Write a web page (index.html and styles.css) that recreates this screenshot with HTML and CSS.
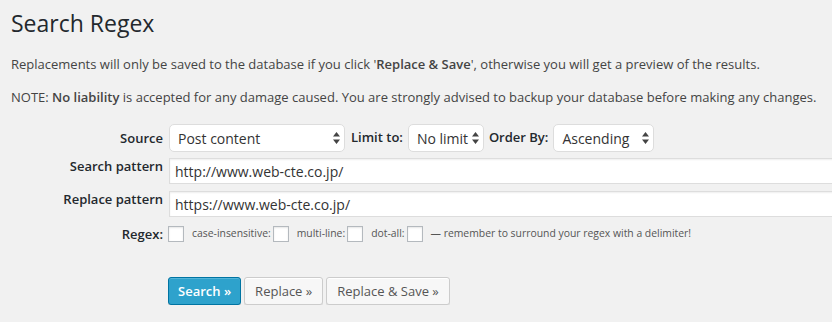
FILE: index.html
```html
<!DOCTYPE html>
<html>
<head>
  <meta charset="utf-8" />
  <meta name="viewport" content="width=device-width" />
  <title>Search Regex</title>
  <link rel="stylesheet" href="styles.css">
</head>

<body>
  <div class="wrap">
    <h1 class="page-title">Search Regex</h1>
    <p>Replacements will only be saved to the database if you click '<strong>Replace &amp; Save</strong>', otherwise you will get a preview of the results.</p>
    <p>NOTE: <strong>No liability</strong> is accepted for any damage caused. You are strongly advised to backup your database before making any changes.</p>

    <form class="regex-form">
      <div class="form-grid">
        <label class="row-label row-label-mid" for="source">Source</label>
        <div class="select-line">
          <span class="select-box select-source">
            <select id="source" name="source">
              <option>Post content</option>
            </select>
            <svg class="select-arrow" width="7" height="12" viewBox="0 0 7 12"><path d="M3.5 0 L7 4.5 H0 Z M0 7.5 H7 L3.5 12 Z" fill="#444"/></svg>
          </span>
          <label class="inline-label" for="limit">Limit to:</label>
          <span class="select-box select-limit">
            <select id="limit" name="limit">
              <option>No limit</option>
            </select>
            <svg class="select-arrow" width="7" height="12" viewBox="0 0 7 12"><path d="M3.5 0 L7 4.5 H0 Z M0 7.5 H7 L3.5 12 Z" fill="#444"/></svg>
          </span>
          <label class="inline-label" for="orderby">Order By:</label>
          <span class="select-box select-order">
            <select id="orderby" name="orderby">
              <option>Ascending</option>
            </select>
            <svg class="select-arrow" width="7" height="12" viewBox="0 0 7 12"><path d="M3.5 0 L7 4.5 H0 Z M0 7.5 H7 L3.5 12 Z" fill="#444"/></svg>
          </span>
        </div>

        <label class="row-label" for="search-pattern">Search pattern</label>
        <input class="pattern-input" id="search-pattern" type="text" value="http://www.web-cte.co.jp/" />

        <label class="row-label" for="replace-pattern">Replace pattern</label>
        <input class="pattern-input" id="replace-pattern" type="text" value="https://www.web-cte.co.jp/" />

        <label class="row-label row-label-mid">Regex:</label>
        <div class="regex-options">
          <input type="checkbox" class="check" />
          <span class="option-text">case-insensitive:</span>
          <input type="checkbox" class="check" />
          <span class="option-text">multi-line:</span>
          <input type="checkbox" class="check" />
          <span class="option-text">dot-all:</span>
          <input type="checkbox" class="check" />
          <span class="option-text">&mdash; remember to surround your regex with a delimiter!</span>
        </div>
      </div>

      <div class="button-row">
        <button type="submit" class="button button-primary">Search &raquo;</button>
        <button type="button" class="button">Replace &raquo;</button>
        <button type="button" class="button">Replace &amp; Save &raquo;</button>
      </div>
    </form>
  </div>
</body>
</html>
```

FILE: styles.css
```css
body {
  margin: 0;
  background-color: #f1f1f1;
  color: #444;
  font-family: 'Open Sans', sans-serif;
  font-size: 13px;
  line-height: 1.5;
}

.wrap {
  padding-left: 11px;
  overflow: hidden;
}

.page-title {
  margin: 0;
  padding: 9px 0 4px;
  font-size: 23px;
  font-weight: 400;
  line-height: 29px;
  color: #23282d;
}

p {
  margin: 13px 0;
}

strong {
  font-weight: 600;
}

.regex-form {
  margin-top: 17px;
}

.form-grid {
  display: grid;
  grid-template-columns: 152px 1fr;
  column-gap: 6px;
  row-gap: 7px;
  align-items: start;
}

.row-label {
  text-align: right;
  font-weight: 600;
  line-height: 16px;
  color: #23282d;
}

.row-label-mid {
  align-self: center;
}

.select-line {
  display: flex;
  align-items: center;
  gap: 5px;
  margin-bottom: -1px;
}

.inline-label {
  font-weight: 600;
  color: #23282d;
}

.select-box {
  position: relative;
  display: inline-block;
}

.select-box select {
  appearance: none;
  -webkit-appearance: none;
  width: 100%;
  height: 28px;
  margin: 0;
  padding: 0 14px 0 8px;
  border: 1px solid #ddd;
  border-radius: 5px;
  background: #fff;
  color: #333;
  font-family: 'Open Sans', sans-serif;
  font-size: 14px;
  outline: none;
}

.select-arrow {
  position: absolute;
  right: 5px;
  top: 8px;
  pointer-events: none;
}

.select-source {
  width: 176px;
  margin-right: 1px;
}

.select-limit {
  width: 76px;
}

.select-order {
  width: 101px;
}

.pattern-input {
  box-sizing: border-box;
  width: 700px;
  height: 26px;
  margin: 0;
  padding: 0 5px;
  border: 1px solid #ddd;
  background: #fff;
  box-shadow: inset 0 1px 2px rgba(0, 0, 0, 0.07);
  color: #333;
  font-family: 'Open Sans', sans-serif;
  font-size: 14px;
  outline: none;
}

.regex-options {
  display: flex;
  align-items: center;
  height: 20px;
  margin-left: -1px;
  font-size: 10.4px;
  color: #555;
}

.check {
  appearance: none;
  -webkit-appearance: none;
  box-sizing: border-box;
  width: 16px;
  height: 16px;
  margin: 0 8px 0 2px;
  border: 1px solid #b4b9be;
  background: #fff;
  box-shadow: inset 0 1px 2px rgba(0, 0, 0, 0.1);
}

.regex-options .check:first-child {
  margin-left: 0;
}

.button-row {
  display: flex;
  gap: 3px;
  margin: 33px 0 0 157px;
}

.button {
  height: 28px;
  margin: 0;
  padding: 0 10px 1px;
  border: 1px solid #ccc;
  border-radius: 3px;
  background: #f7f7f7;
  box-shadow: inset 0 1px 0 #fff, 0 1px 0 rgba(0, 0, 0, 0.08);
  color: #555;
  font-family: 'Open Sans', sans-serif;
  font-size: 13px;
  line-height: 26px;
  cursor: pointer;
}

.button-primary {
  padding: 0 9px 1px;
  background: #2ea2cc;
  border-color: #0074a2;
  box-shadow: inset 0 1px 0 rgba(120, 200, 230, 0.5), 0 1px 0 rgba(0, 0, 0, 0.15);
  color: #fff;
  font-weight: 600;
}
```
